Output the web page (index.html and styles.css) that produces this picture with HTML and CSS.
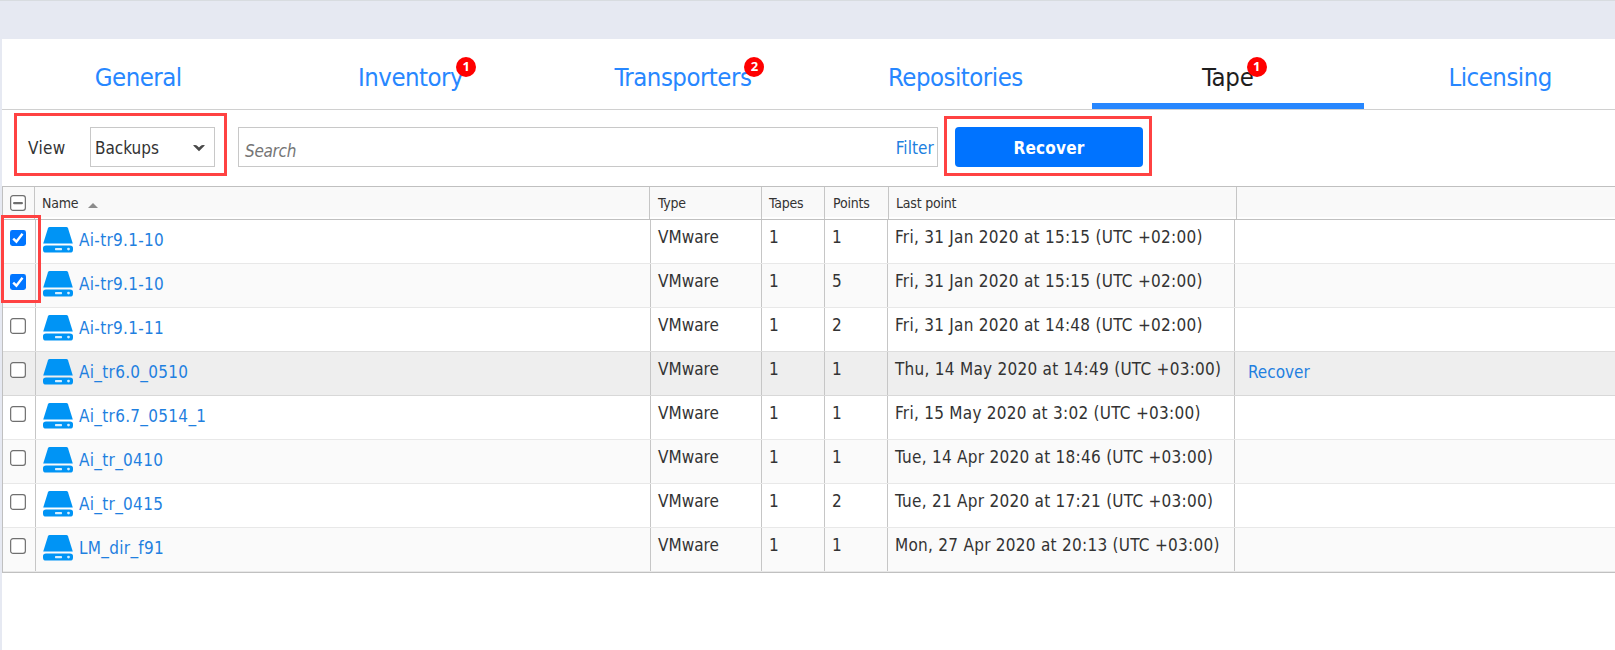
FILE: index.html
```
<!DOCTYPE html>
<html lang="en">
<head>
<meta charset="utf-8">
<title>Tape backups</title>
<link rel="stylesheet" href="styles.css">
</head>
<body>
<svg class="defs" width="0" height="0">
  <symbol id="disk" viewBox="0 0 30 26">
    <path d="M6.6 0h16.8q1.2 0 1.6 1.2L29.8 16.6H.2L5 1.2Q5.4 0 6.6 0Z" fill="#0094f5"/>
    <path d="M3 18.4h24q3 0 3 2.6v1.4q0 3.2-3 3.2H3q-3 0-3-3.2V21q0-2.6 3-2.6Z" fill="#0094f5"/>
    <rect x="12" y="21" width="7" height="2.2" rx=".6" fill="#d5eefe"/>
    <circle cx="25.5" cy="22.1" r="1.4" fill="#d5eefe"/>
  </symbol>
  <symbol id="box" viewBox="0 0 16 16"><rect x=".65" y=".65" width="14.7" height="14.7" rx="2.4" fill="#fff" stroke="#6f6f6f" stroke-width="1.2"/></symbol>
  <symbol id="mixed" viewBox="0 0 16 16"><rect x=".65" y=".65" width="14.7" height="14.7" rx="2.4" fill="#fff" stroke="#6f6f6f" stroke-width="1.2"/><rect x="3" y="6.9" width="10" height="2.4" rx="1.2" fill="#6f6f6f"/></symbol>
  <symbol id="checked" viewBox="0 0 16 16"><rect width="16" height="16" rx="2.4" fill="#0075ff"/><path d="M3.2 8.6 6.4 11.7 12.5 3.7" fill="none" stroke="#fff" stroke-width="2.4"/></symbol>
</svg>
<main class="panel">
  <nav class="tabs">
    <a class="tab"><span class="label">General</span></a>
    <a class="tab"><span class="label">Inventory<b class="badge">1</b></span></a>
    <a class="tab"><span class="label">Transporters<b class="badge">2</b></span></a>
    <a class="tab"><span class="label">Repositories</span></a>
    <a class="tab active"><span class="label">Tape<b class="badge">1</b></span></a>
    <a class="tab"><span class="label">Licensing</span></a>
  </nav>
  <div class="toolbar">
    <span class="view">View</span>
    <div class="select">Backups<svg width="12" height="8" viewBox="0 0 12 8"><path d="M0 1.2Q3 .4 4.4 1.9L6 3.4 7.6 1.9Q9 .4 12 1.2L6 7.2Z" fill="#484848"/></svg></div>
    <div class="search"><i>Search</i><a class="filter">Filter</a></div>
    <div class="button">Recover</div>
    <div class="mark mark-view"></div>
    <div class="mark mark-button"></div>
  </div>
  <section class="table">
    <div class="head">
      <div class="check"><svg><use href="#mixed"/></svg></div>
      <div>Name<svg class="sort" width="10" height="5" viewBox="0 0 10 5"><path d="M0 5 5 0 10 5Z" fill="#8c8c8c"/></svg></div>
      <div>Type</div><div>Tapes</div><div>Points</div><div>Last point</div><div></div>
    </div>
    <div class="row"><div class="check"><svg><use href="#checked"/></svg></div><div class="name"><svg><use href="#disk"/></svg><a>Ai-tr9.1-10</a></div><div>VMware</div><div>1</div><div>1</div><div class="date">Fri, 31 Jan 2020 at 15:15 (UTC +02:00)</div><div></div></div>
    <div class="row"><div class="check"><svg><use href="#checked"/></svg></div><div class="name"><svg><use href="#disk"/></svg><a>Ai-tr9.1-10</a></div><div>VMware</div><div>1</div><div>5</div><div class="date">Fri, 31 Jan 2020 at 15:15 (UTC +02:00)</div><div></div></div>
    <div class="row above-hover"><div class="check"><svg><use href="#box"/></svg></div><div class="name"><svg><use href="#disk"/></svg><a>Ai-tr9.1-11</a></div><div>VMware</div><div>1</div><div>2</div><div class="date">Fri, 31 Jan 2020 at 14:48 (UTC +02:00)</div><div></div></div>
    <div class="row hover"><div class="check"><svg><use href="#box"/></svg></div><div class="name"><svg><use href="#disk"/></svg><a>Ai_tr6.0_0510</a></div><div>VMware</div><div>1</div><div>1</div><div class="date">Thu, 14 May 2020 at 14:49 (UTC +03:00)</div><div class="action"><a>Recover</a></div></div>
    <div class="row"><div class="check"><svg><use href="#box"/></svg></div><div class="name"><svg><use href="#disk"/></svg><a>Ai_tr6.7_0514_1</a></div><div>VMware</div><div>1</div><div>1</div><div class="date">Fri, 15 May 2020 at 3:02 (UTC +03:00)</div><div></div></div>
    <div class="row"><div class="check"><svg><use href="#box"/></svg></div><div class="name"><svg><use href="#disk"/></svg><a>Ai_tr_0410</a></div><div>VMware</div><div>1</div><div>1</div><div class="date">Tue, 14 Apr 2020 at 18:46 (UTC +03:00)</div><div></div></div>
    <div class="row"><div class="check"><svg><use href="#box"/></svg></div><div class="name"><svg><use href="#disk"/></svg><a>Ai_tr_0415</a></div><div>VMware</div><div>1</div><div>2</div><div class="date">Tue, 21 Apr 2020 at 17:21 (UTC +03:00)</div><div></div></div>
    <div class="row"><div class="check"><svg><use href="#box"/></svg></div><div class="name"><svg><use href="#disk"/></svg><a>LM_dir_f91</a></div><div>VMware</div><div>1</div><div>1</div><div class="date">Mon, 27 Apr 2020 at 20:13 (UTC +03:00)</div><div></div></div>
    <div class="mark mark-checks"></div>
  </section>
</main>
</body>
</html>
```
FILE: styles.css
```
* { box-sizing: border-box; }
body {
  margin: 0;
  height: 650px;
  overflow: hidden;
  padding: 38px 0 0 2px;
  border-top: 1px solid #d8dce0;
  background: #e6e9f2;
  color: #333;
  font: 17px "DejaVu Sans Condensed", "DejaVu Sans", sans-serif;
  font-stretch: condensed;
  white-space: nowrap;
}
.defs { position: absolute; }
.panel { height: 611px; background: #fff; }

.tabs {
  display: grid;
  grid-template-columns: repeat(6, 272.4px);
  height: 71px;
  border-bottom: 1px solid #d0d0d0;
}
.tab {
  display: flex;
  justify-content: center;
  height: 70px;
  font-size: 25.5px;
  line-height: 76px;
  letter-spacing: -0.5px;
  color: #2787ff;
}
.tab.active { color: #1e1e1e; border-bottom: 6px solid #2787ff; letter-spacing: -0.2px; }
.label { position: relative; height: 60px; }
.badge {
  position: absolute;
  left: calc(100% - 7px);
  top: 18px;
  width: 20px;
  height: 20px;
  border-radius: 50%;
  background: #f00;
  color: #fff;
  font: bold 13px/19px "Noto Sans", sans-serif;
  letter-spacing: 0;
  text-align: center;
}

.toolbar {
  position: relative;
  display: flex;
  height: 76px;
  padding: 17px 0 19px 26px;
  line-height: 42px;
}
.view { width: 62px; letter-spacing: 0.3px; }
.select {
  display: flex;
  justify-content: space-between;
  width: 125px;
  border: 1px solid #c8c8c8;
  padding: 0 9px 0 4px;
  line-height: 40px;
}
.select svg { margin-top: 16px; }
.search {
  display: flex;
  justify-content: space-between;
  width: 700px;
  margin-left: 23px;
  padding: 0 3px 0 6px;
  border: 1px solid #c8c8c8;
  line-height: 40px;
}
.search i { color: #757575; line-height: 46px; letter-spacing: -0.3px; }
.filter { color: #2080e0; letter-spacing: 0.1px; }
.button {
  width: 188px;
  margin-left: 17px;
  border-radius: 4px;
  background: #0073ff;
  color: #fff;
  font-weight: bold;
  letter-spacing: 0.2px;
  text-align: center;
}
.mark { position: absolute; border: 3px solid #ff4242; }
.mark-view { left: 12px; top: 3px; width: 213px; height: 63px; }
.mark-button { left: 942px; top: 6px; width: 208px; height: 60px; }
.mark-checks { left: -2px; top: 28px; width: 40px; height: 88px; }

.table {
  position: relative;
  border: solid #c0c0c0;
  border-width: 1px 0 1px 1px;
}
.head, .row { display: grid; }
.head > div, .row > div { border-right: 1px solid #c6c6c6; padding-left: 7px; }
.head > div:last-child, .row > div:last-child { border-right: 0; }
.head {
  grid-template-columns: 32px 615px 112px 63px 64px 348px 1fr;
  height: 33px;
  padding-bottom: 3px;
  border-bottom: 1px solid #c0c0c0;
  background: linear-gradient(#f9f9f9 30px, #fff 30px);
  font-size: 14px;
  line-height: 32px;
  letter-spacing: -0.2px;
}
.head > div { padding-left: 8px; }
.head > div:nth-child(2), .head > div:nth-child(4), .head > div:nth-child(6) { padding-left: 7px; }
.sort { margin-left: 10px; }
.row {
  grid-template-columns: 33px 615px 111px 63px 63px 347px 1fr;
  height: 44px;
  border-bottom: 1px solid #e8e8e8;
  line-height: 34px;
}
.row:nth-child(odd) { background: #fafafa; }
.row.above-hover { border-color: #ddd; }
.row.hover { background: #eee; border-color: #d8d8d8; }
.date { letter-spacing: 0.27px; }
.row > .name { display: flex; gap: 6px; line-height: 40px; letter-spacing: 0.3px; }
.name svg { width: 30px; height: 26px; margin-top: 7px; }
.row a { color: #1f80e0; }
.row > .action { padding-left: 13px; line-height: 40px; }
.check svg { display: block; width: 16px; height: 16px; }
.head > .check { padding: 8px 0 0 7px; }
.row > .check { padding: 10px 0 0 7px; }
```
